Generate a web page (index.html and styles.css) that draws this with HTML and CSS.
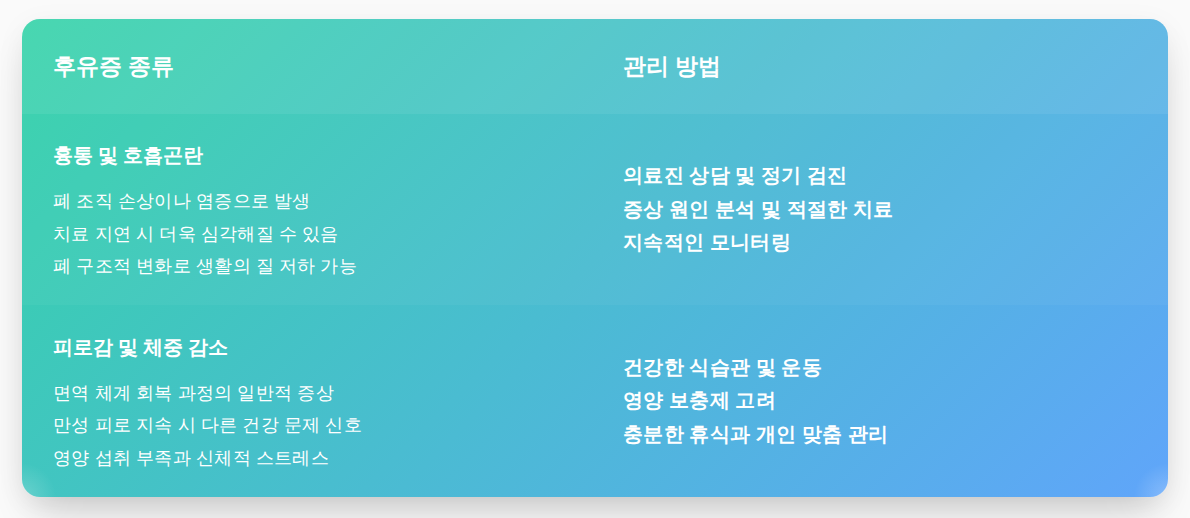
FILE: index.html
```html
<!DOCTYPE html>
<html lang="ko">
<head>
<meta charset="utf-8">
<title>후유증 관리</title>
<link rel="stylesheet" href="styles.css">
</head>
<body>
<div class="page">
  <section class="card">
    <div class="row head">
      <div class="cell">후유증 종류</div>
      <div class="cell">관리 방법</div>
    </div>
    <div class="row odd">
      <div class="cell symptom">
        <h3 class="title">흉통 및 호흡곤란</h3>
        <ul class="list">
          <li>폐 조직 손상이나 염증으로 발생</li>
          <li>치료 지연 시 더욱 심각해질 수 있음</li>
          <li>폐 구조적 변화로 생활의 질 저하 가능</li>
        </ul>
      </div>
      <div class="cell care">
        <ul class="list strong">
          <li>의료진 상담 및 정기 검진</li>
          <li>증상 원인 분석 및 적절한 치료</li>
          <li>지속적인 모니터링</li>
        </ul>
      </div>
    </div>
    <div class="row last">
      <div class="cell symptom">
        <h3 class="title">피로감 및 체중 감소</h3>
        <ul class="list">
          <li>면역 체계 회복 과정의 일반적 증상</li>
          <li>만성 피로 지속 시 다른 건강 문제 신호</li>
          <li>영양 섭취 부족과 신체적 스트레스</li>
        </ul>
      </div>
      <div class="cell care">
        <ul class="list strong">
          <li>건강한 식습관 및 운동</li>
          <li>영양 보충제 고려</li>
          <li>충분한 휴식과 개인 맞춤 관리</li>
        </ul>
      </div>
    </div>
  </section>
</div>
</body>
</html>
```
FILE: styles.css
```css
* { box-sizing: border-box; }
html, body {
  margin: 0;
  background: #fafafa;
  font-family: "Roboto", "Liberation Sans", serif;
  color: #fff;
}
.page {
  padding: 19px 22px 40px;
}
.card {
  width: 1146px;
  border-radius: 18px;
  overflow: hidden;
  background: linear-gradient(135deg, #34d3a8 0%, #60a5fa 100%);
  box-shadow: 0 22px 40px -12px rgba(0, 0, 0, 0.2), 0 6px 30px rgba(0, 0, 0, 0.05);
}
.row {
  display: grid;
  grid-template-columns: 570px 1fr;
}
.cell {
  padding: 0 31px;
}
.head {
  background: rgba(255, 255, 255, 0.1);
  height: 95px;
  align-items: center;
  font-size: 23px;
  font-weight: 700;
  line-height: 32px;
  padding-top: 1px;
}
.odd {
  background: rgba(255, 255, 255, 0.04);
  height: 191px;
  align-items: center;
}
.last {
  height: 192px;
  align-items: center;
  background:
    radial-gradient(circle at 0 100%, rgba(255, 255, 255, 0.22), rgba(255, 255, 255, 0) 34px),
    radial-gradient(circle at 100% 100%, rgba(255, 255, 255, 0.25), rgba(255, 255, 255, 0) 34px);
}
.symptom {
  padding-top: 5px;
}
.title {
  margin: 0 0 16px;
  font-size: 20px;
  line-height: 28px;
  font-weight: 700;
}
.list {
  list-style: none;
  margin: 0;
  padding: 0;
  font-size: 18px;
  line-height: 32.5px;
  font-weight: 400;
  letter-spacing: 0.35px;
}
.list.strong {
  font-size: 20px;
  line-height: 33.5px;
  font-weight: 600;
  letter-spacing: 0.35px;
}
```
